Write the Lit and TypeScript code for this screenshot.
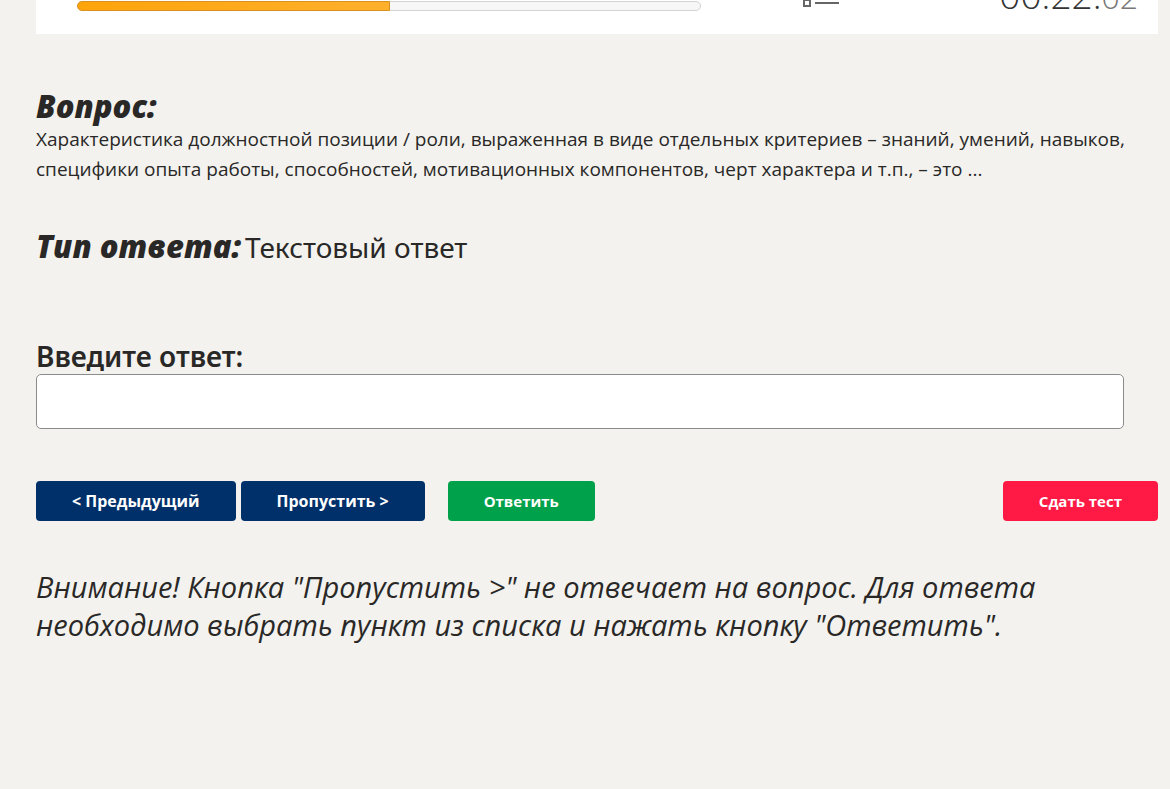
import { LitElement, html, css } from "lit";
import { customElement } from "lit/decorators.js";

@customElement("app-root")
class AppRoot extends LitElement {
  static styles = css`
    :host { display: block; min-height: 100vh; background: #f3f2ee; color: #292827; font-family: "Open Sans", sans-serif; }
    * { box-sizing: border-box; margin: 0; }
    .page { padding: 0 12px 0 36px; }
    .top { height: 34px; background: #fff; display: flex; align-items: flex-end; padding: 0 20px 0 41px; overflow: hidden; }
    .bar { flex: 0 1 624px; height: 10px; margin-bottom: 23px; border: 1px solid #d4d4d4; border-radius: 5px; background: #f7f7f7; }
    .fill { height: 10px; margin: -1px; border: 1px solid #d9921f; border-radius: 5px 0 0 5px; background: linear-gradient(90deg, #fea40b, #ffb02c); }
    .list { flex: none; display: block; width: 38px; height: 34px; margin: 0 0 26px 101px; }
    .time { margin-left: auto; font-size: 37px; line-height: 40px; font-weight: 300; color: #333; margin-bottom: 17px; white-space: nowrap; }
    .time small { font-size: 32px; color: #777; }
    h2 { font: italic 800 31px/36px "Open Sans", sans-serif; }
    .question { padding-top: 54px; }
    .question p { font-size: 19px; line-height: 30px; }
    .type { display: flex; gap: 4px; align-items: baseline; font: 28px/40px "Noto Sans", sans-serif; margin-top: 43px; }
    .form { margin-top: 70px; }
    label { display: block; font: 600 28px/36px "Noto Sans", sans-serif; padding-top: 1px; }
    input { display: block; width: calc(100% - 34px); height: 55px; border: 1px solid #8b8b8b; border-radius: 5px; background: #fff; font: inherit; padding: 0 12px; }
    .actions { display: flex; margin-top: 52px; gap: 5px; }
    button { height: 40px; border: 0; border-radius: 4px; background: #003069; color: #fff; font: 700 16px/24px "Open Sans", sans-serif; padding: 0 36px; }
    .answer, .finish { font-size: 15px; }
    .answer { background: #00a14b; margin-left: 18px; }
    .finish { background: #ff1a45; margin-left: auto; }
    .note { font-size: 29px; line-height: 38px; font-style: italic; margin-top: 47px; }
  `;
  render() {
    return html`<main class="page">
      <header class="top">
        <div class="bar" role="progressbar" aria-label="Вопрос" aria-valuenow="50" aria-valuemin="0" aria-valuemax="100"><div class="fill" style="width:50.3%"></div></div>
        <svg class="list" viewBox="0 0 38 34" fill="none" stroke="#666" stroke-width="2" aria-hidden="true"><path d="M2 2h6v6H2zM13 5h24M2 14h6v6H2zM13 17h24M2 26h6v6H2zM13 29h24"/></svg>
        <time class="time">00:22:<small>02</small></time>
      </header>
      <section class="question"><h2>Вопрос:</h2><p>Характеристика должностной позиции / роли, выраженная в виде отдельных критериев – знаний, умений, навыков, специфики опыта работы, способностей, мотивационных компонентов, черт характера и т.п., – это ...</p></section>
      <div class="type"><h2>Тип ответа:</h2><span>Текстовый ответ</span></div>
      <form class="form" @submit=${(e: Event) => e.preventDefault()}><label for="a">Введите ответ:</label><input id="a" type="text" />
      <div class="actions"><button type="button">&lt; Предыдущий</button><button type="button">Пропустить &gt;</button><button class="answer">Ответить</button><button type="button" class="finish">Сдать тест</button></div></form>
      <p class="note">Внимание! Кнопка "Пропустить &gt;" не отвечает на вопрос. Для ответа необходимо выбрать пункт из списка и нажать кнопку "Ответить".</p>
    </main>`;
  }
}
